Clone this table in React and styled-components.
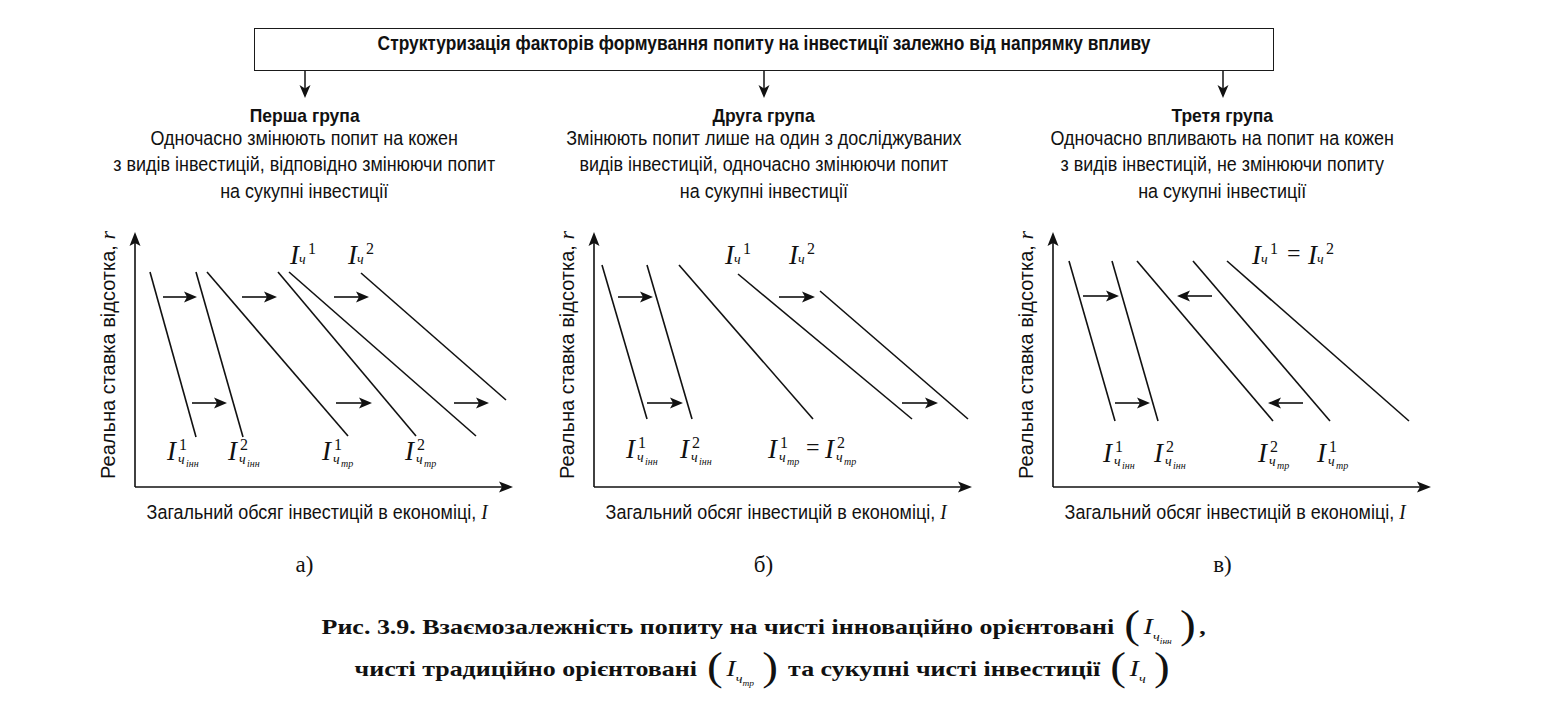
import React from "react";
import styled, { createGlobalStyle } from "styled-components";

const GlobalStyle = createGlobalStyle`
  html, body {
    margin: 0;
    padding: 0;
    background: #ffffff;
  }
  body {
    font-family: "Liberation Sans", Arial, sans-serif;
    color: #111111;
  }
`;

const groups = [
  {
    title: "Перша група",
    text: ["Одночасно змінюють попит на кожен", "з видів інвестицій, відповідно змінюючи попит", "на сукупні інвестиції"],
    mark: "а)",
    lines: [
      [25, 50, 71, 215],
      [71, 50, 118, 215],
      [82, 50, 223, 214],
      [153, 50, 291, 214],
      [164, 50, 351, 214],
      [236, 51, 381, 178],
    ],
    arrows: [
      [38, 72, 75],
      [117, 152, 75],
      [209, 244, 75],
      [67, 102, 181],
      [211, 247, 181],
      [329, 364, 181],
    ],
    labels: [
      { x: 165, y: 42, sup: "1", spread: true },
      { x: 223, y: 42, sup: "2", spread: true },
      { x: 42, y: 238, sup: "1", subsub: "інн" },
      { x: 103, y: 238, sup: "2", subsub: "інн" },
      { x: 197, y: 238, sup: "1", subsub: "тр" },
      { x: 280, y: 238, sup: "2", subsub: "тр" },
    ],
    signs: [],
  },
  {
    title: "Друга група",
    text: ["Змінюють попит лише на один з досліджуваних", "видів інвестицій, одночасно змінюючи попит", "на сукупні інвестиції"],
    mark: "б)",
    lines: [
      [18, 43, 63, 197],
      [63, 43, 108, 197],
      [95, 43, 229, 197],
      [154, 52, 328, 197],
      [236, 69, 384, 197],
    ],
    arrows: [
      [34, 69, 75],
      [195, 231, 75],
      [63, 99, 181],
      [318, 354, 181],
    ],
    labels: [
      { x: 141, y: 42, sup: "1", spread: true },
      { x: 205, y: 42, sup: "2", spread: true },
      { x: 42, y: 236, sup: "1", subsub: "інн" },
      { x: 96, y: 236, sup: "2", subsub: "інн" },
      { x: 184, y: 236, sup: "1", subsub: "тр" },
      { x: 241, y: 236, sup: "2", subsub: "тр" },
    ],
    signs: [{ x: 222, y: 236 }],
  },
  {
    title: "Третя група",
    text: ["Одночасно впливають на попит на кожен", "з видів інвестицій, не змінюючи попиту", "на сукупні інвестиції"],
    mark: "в)",
    lines: [
      [26, 39, 72, 199],
      [69, 39, 115, 199],
      [94, 39, 230, 199],
      [150, 39, 287, 199],
      [184, 39, 366, 199],
    ],
    arrows: [
      [40, 76, 74],
      [169, 134, 74],
      [72, 107, 181],
      [260, 225, 181],
    ],
    labels: [
      { x: 209, y: 42, sup: "1", spread: true },
      { x: 265, y: 42, sup: "2", spread: true },
      { x: 60, y: 240, sup: "1", subsub: "інн" },
      { x: 111, y: 240, sup: "2", subsub: "інн" },
      { x: 215, y: 240, sup: "2", subsub: "тр" },
      { x: 274, y: 240, sup: "1", subsub: "тр" },
    ],
    signs: [{ x: 244, y: 42 }],
  },
];

const Page = styled.div`
  width: 1377px;
  padding: 28px 0 20px 75px;
  display: flex;
  flex-direction: column;
  align-items: center;
`;

const TitleBox = styled.div`
  width: 1020px;
  height: 43px;
  box-sizing: border-box;
  border: 1.5px solid #1a1a1a;
  padding-top: 3px;
  font-size: 19.5px;
  line-height: 22px;
  font-weight: bold;
  text-align: center;
  white-space: nowrap;
`;

const TitleText = styled.div`
  transform: scaleX(0.89);
`;

const Groups = styled.div`
  display: grid;
  grid-template-columns: repeat(3, 459px);
`;

const Group = styled.section`
  display: flex;
  flex-direction: column;
  align-items: center;
`;

const Heading = styled.h2`
  margin: 10px 0 0;
  font-size: 19px;
  line-height: 16px;
  font-weight: bold;
  transform: scaleX(0.92);
`;

const Desc = styled.p`
  margin: 1px 0 0;
  font-size: 20.5px;
  line-height: 26.3px;
  text-align: center;
  white-space: nowrap;
  transform: scaleX(0.875);
`;

const ChartRow = styled.div`
  align-self: stretch;
  display: flex;
  margin-top: 18px;
`;

const YAxisBox = styled.div`
  width: 50px;
  height: 275px;
  box-sizing: border-box;
  padding: 0 0 8px 23px;
  display: flex;
  align-items: center;
`;

const YAxisText = styled.span`
  writing-mode: vertical-rl;
  transform: rotate(180deg);
  font-size: 20px;
  line-height: 20px;
  white-space: nowrap;
`;

const MathLetter = styled.i`
  font-family: "Liberation Serif", "Times New Roman", serif;
  font-size: 22px;
`;

const Plot = styled.svg`
  display: block;
  overflow: visible;
  line {
    stroke: #111111;
    stroke-width: 1.6;
  }
  path {
    fill: #111111;
  }
`;

const SerifText = styled.text`
  font-family: "Liberation Serif", "Times New Roman", serif;
  fill: #111111;
`;

const BigI = styled(SerifText)`
  font-style: italic;
  font-size: 27px;
`;

const SupNum = styled(SerifText)`
  font-size: 16px;
`;

const SubCh = styled(SerifText)`
  font-style: italic;
  font-size: 14px;
`;

const SubSub = styled(SerifText)`
  font-style: italic;
  font-size: 10px;
`;

const Equals = styled(SerifText)`
  font-size: 24px;
`;

const XAxisText = styled.div`
  margin-top: 4px;
  padding-left: 28px;
  font-size: 20.5px;
  line-height: 22px;
  white-space: nowrap;
  transform: scaleX(0.875);
`;

const Mark = styled.div`
  margin-top: 29px;
  font-family: "Liberation Serif", "Times New Roman", serif;
  font-size: 23px;
  line-height: 26px;
`;

const Caption = styled.p`
  margin: 0;
  font-family: "Liberation Serif", "Times New Roman", serif;
  font-weight: bold;
  font-size: 22px;
  line-height: 42px;
  text-align: center;
  white-space: nowrap;
  transform: scaleX(1.18);
  &:first-of-type {
    margin-top: 28px;
  }
`;

const Formula = styled.span`
  font-weight: normal;
`;

const Paren = styled.span`
  font-size: 40px;
  line-height: 0;
  vertical-align: -4px;
  margin: 0 3px;
`;

const FVar = styled.i`
  font-size: 24px;
  line-height: 1;
`;

const FSub = styled.i`
  font-size: 12px;
  line-height: 1;
  vertical-align: -7px;
  margin-right: 4px;
`;

const FSubSub = styled.i`
  font-size: 8px;
  line-height: 1;
  vertical-align: -3px;
`;

const DownArrow = () => (
  <svg width="12" height="27" viewBox="0 0 12 27">
    <line x1="6" y1="0" x2="6" y2="20" stroke="#111" strokeWidth="1.5" />
    <path d="M6 27 L0.5 14 L6 17.5 L11.5 14 Z" fill="#111" />
  </svg>
);

const Arrow = ({ x1, x2, y }) => {
  const d = x2 > x1 ? 1 : -1;
  return (
    <g>
      <line x1={x1} y1={y} x2={x2 - d * 6} y2={y} />
      <path d={`M${x2} ${y} L${x2 - d * 13} ${y - 5.5} L${x2 - d * 10} ${y} L${x2 - d * 13} ${y + 5.5} Z`} />
    </g>
  );
};

const Symbol = ({ x, y, sup, subsub, spread }) => (
  <g transform={`translate(${x} ${y})`}>
    <BigI x="0" y="0">I</BigI>
    <SupNum x={spread ? 18 : 12} y="-10">{sup}</SupNum>
    <SubCh x={spread ? 9 : 11} y={spread ? 0 : 4}>ч</SubCh>
    {subsub && <SubSub x="19" y="7">{subsub}</SubSub>}
  </g>
);

const Chart = ({ lines, arrows, labels, signs }) => (
  <Plot width="409" height="275" viewBox="0 0 409 275">
    <line x1="10" y1="265" x2="10" y2="18" />
    <path d="M10 10 L4.5 24 L10 21 L15.5 24 Z" />
    <line x1="10" y1="265" x2="380" y2="265" />
    <path d="M388 265 L374 259.5 L377 265 L374 270.5 Z" />
    {lines.map(([x1, y1, x2, y2], i) => (
      <line key={i} x1={x1} y1={y1} x2={x2} y2={y2} />
    ))}
    {arrows.map(([x1, x2, y], i) => (
      <Arrow key={i} x1={x1} x2={x2} y={y} />
    ))}
    {labels.map((l, i) => (
      <Symbol key={i} {...l} />
    ))}
    {signs.map((s, i) => (
      <Equals key={i} x={s.x} y={s.y - 3}>=</Equals>
    ))}
  </Plot>
);

const CaptionFormula = ({ sub }) => (
  <Formula>
    <Paren>(</Paren>
    <FVar>I</FVar>
    <FSub>
      ч{sub && <FSubSub>{sub}</FSubSub>}
    </FSub>
    <Paren>)</Paren>
  </Formula>
);

export default function App() {
  return (
    <>
      <GlobalStyle />
      <Page>
        <TitleBox>
          <TitleText>Структуризація факторів формування попиту на інвестиції залежно від напрямку впливу</TitleText>
        </TitleBox>
        <Groups>
          {groups.map((g) => (
            <Group key={g.title}>
              <DownArrow />
              <Heading>{g.title}</Heading>
              <Desc>
                {g.text.map((t, i) => (
                  <React.Fragment key={i}>
                    {t}
                    {i < g.text.length - 1 && <br />}
                  </React.Fragment>
                ))}
              </Desc>
              <ChartRow>
                <YAxisBox>
                  <YAxisText>
                    Реальна ставка відсотка, <MathLetter>r</MathLetter>
                  </YAxisText>
                </YAxisBox>
                <Chart {...g} />
              </ChartRow>
              <XAxisText>
                Загальний обсяг інвестицій в економіці, <MathLetter>I</MathLetter>
              </XAxisText>
              <Mark>{g.mark}</Mark>
            </Group>
          ))}
        </Groups>
        <Caption>
          Рис. 3.9. Взаємозалежність попиту на чисті інноваційно орієнтовані <CaptionFormula sub="інн" />,
        </Caption>
        <Caption>
          чисті традиційно орієнтовані <CaptionFormula sub="тр" /> та сукупні чисті інвестиції <CaptionFormula />
        </Caption>
      </Page>
    </>
  );
}
